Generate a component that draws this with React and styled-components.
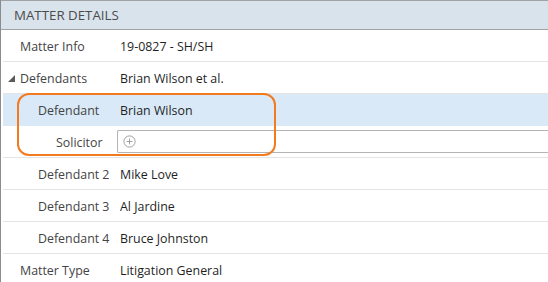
import React from 'react';
import styled, { createGlobalStyle } from 'styled-components';

const GlobalStyle = createGlobalStyle`
  html, body {
    margin: 0;
    padding: 0;
    background: #ffffff;
  }
  body {
    font-family: "Open Sans", "Noto Sans", sans-serif;
    width: 548px;
    height: 282px;
    overflow: hidden;
  }
`

const Panel = styled.div`
  width: 548px;
  height: 282px;
  box-sizing: border-box;
  border-left: 1px solid #8c8c8c;
  display: flex;
  flex-direction: column;
  overflow: hidden;
`

const Header = styled.div`
  height: 28px;
  border-top: 1px solid #a2a2a2;
  border-bottom: 1px solid #a2a2a2;
  background: #d9e3ec;
  display: flex;
  align-items: center;
  padding-left: 13px;
  font-size: 13.3px;
  color: #4c4c4c;
  flex-shrink: 0;
`

const Row = styled.div`
  height: 29px;
  padding-top: 2px;
  flex-shrink: 0;
  display: flex;
  align-items: center;
  margin-left: 2px;
  border-bottom: 1px solid ${p => (p.$highlight ? '#d9e9f7' : '#e4e4e4')};
  background: ${p => (p.$highlight ? '#d9e9f7' : 'transparent')};
  font-size: 12.4px;
`

const Label = styled.div`
  width: 117px;
  flex-shrink: 0;
  box-sizing: border-box;
  padding-left: ${p => 17 + p.$level * 18}px;
  color: #444444;
  display: flex;
  align-items: center;
  position: relative;
  white-space: nowrap;
`

const Expander = styled.svg`
  position: absolute;
  left: 5px;
  top: 50%;
  margin-top: -4px;
  width: 7px;
  height: 7px;
`

const Value = styled.div`
  color: #1f1f1f;
  white-space: nowrap;
  flex: 1;
  display: flex;
  align-items: center;
`

const InputBox = styled.div`
  flex: 1;
  height: 21px;
  margin-left: -3px;
  margin-top: -2px;
  border: 1px solid #b4b4b4;
  border-right: none;
  border-radius: 2px 0 0 2px;
  display: flex;
  align-items: center;
  padding-left: 5px;
  background: #ffffff;
`

const Group = styled.div`
  position: relative;
  display: flex;
  flex-direction: column;
  flex-shrink: 0;

  &::after {
    content: '';
    position: absolute;
    left: 16px;
    top: -1px;
    width: 255px;
    height: 59px;
    border: 2px solid #f27a1f;
    border-radius: 12px;
    pointer-events: none;
  }
`

const PlusIcon = () => (
  <svg width="13" height="13" viewBox="0 0 13 13">
    <circle cx="6.5" cy="6.5" r="5.6" fill="none" stroke="#a0a0a0" strokeWidth="1" />
    <path d="M6.5 3.6 V9.4 M3.6 6.5 H9.4" stroke="#a0a0a0" strokeWidth="1" />
  </svg>
)

const DetailRow = ({ label, value, level = 0, expander, highlight, children }) => (
  <Row $highlight={highlight}>
    <Label $level={level}>
      {expander && (
        <Expander viewBox="0 0 7 7">
          <polygon points="7,0 7,7 0,7" fill="#5a5a5a" />
        </Expander>
      )}
      {label}
    </Label>
    {children || <Value>{value}</Value>}
  </Row>
)

export default function App() {
  return (
    <>
      <GlobalStyle />
      <Panel>
        <Header>MATTER DETAILS</Header>
        <DetailRow label="Matter Info" value="19-0827 - SH/SH" />
        <DetailRow label="Defendants" value="Brian Wilson et al." expander />
        <Group>
          <DetailRow label="Defendant" value="Brian Wilson" level={1} highlight />
          <DetailRow label="Solicitor" level={2}>
            <InputBox>
              <PlusIcon />
            </InputBox>
          </DetailRow>
        </Group>
        <DetailRow label="Defendant 2" value="Mike Love" level={1} />
        <DetailRow label="Defendant 3" value="Al Jardine" level={1} />
        <DetailRow label="Defendant 4" value="Bruce Johnston" level={1} />
        <DetailRow label="Matter Type" value="Litigation General" />
      </Panel>
    </>
  );
}
